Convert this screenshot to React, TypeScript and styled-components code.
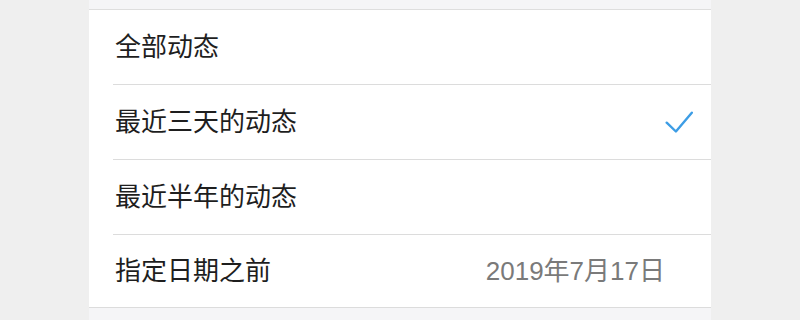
import React from "react";
import styled, { createGlobalStyle } from "styled-components";

const Global = createGlobalStyle`
  html, body { margin: 0; padding: 0; }
  body { font-family: "Noto Sans CJK SC", "Noto Sans", sans-serif; }
`;

const Page = styled.div`
  width: 800px;
  height: 320px;
  background: #efefef;
  display: flex;
  justify-content: center;
  overflow: hidden;
`;

const Panel = styled.div`
  width: 622px;
  background: #f5f5f7;
  padding-top: 9px;
  box-sizing: border-box;
`;

const List = styled.div`
  background: #ffffff;
  border-top: 1px solid #dedede;
  border-bottom: 1px solid #dcdcdc;
  display: flex;
  flex-direction: column;
`;

const Row = styled.div<{ $last?: boolean }>`
  position: relative;
  height: ${(p) => (p.$last ? 72 : 74)}px;
  display: flex;
  align-items: center;
  padding-left: 26px;
  padding-right: 18px;
  padding-bottom: 6px;
  box-sizing: border-box;
  &::after {
    content: "";
    display: ${(p) => (p.$last ? "none" : "block")};
    position: absolute;
    left: 24px;
    right: 0;
    bottom: -1px;
    height: 1px;
    background: #dcdcdc;
  }
  & + & {
    margin-top: 1px;
  }
`;

const Label = styled.span`
  flex: 1;
  font-size: 26px;
  color: #1e1e1e;
`;

const Value = styled.span`
  font-size: 26px;
  color: #7a7a7a;
  margin-right: 28px;
  font-family: "Liberation Sans", "Noto Sans CJK SC", sans-serif;
`;

const CheckIcon = styled.svg`
  margin-top: 6px;
  flex: none;
`;

const Check = () => (
  <CheckIcon width="28" height="22" viewBox="0 0 28 22" fill="none">
    <path
      d="M1.7 11.7 L10.9 20.5 L26.8 1.7"
      stroke="#3d9de5"
      strokeWidth="2.4"
      strokeLinecap="round"
      strokeLinejoin="round"
    />
  </CheckIcon>
);

export default function App() {
  return (
    <>
      <Global />
      <Page>
        <Panel>
          <List>
            <Row>
              <Label>全部动态</Label>
            </Row>
            <Row>
              <Label>最近三天的动态</Label>
              <Check />
            </Row>
            <Row>
              <Label>最近半年的动态</Label>
            </Row>
            <Row $last>
              <Label>指定日期之前</Label>
              <Value>2019年7月17日</Value>
            </Row>
          </List>
        </Panel>
      </Page>
    </>
  );
}
